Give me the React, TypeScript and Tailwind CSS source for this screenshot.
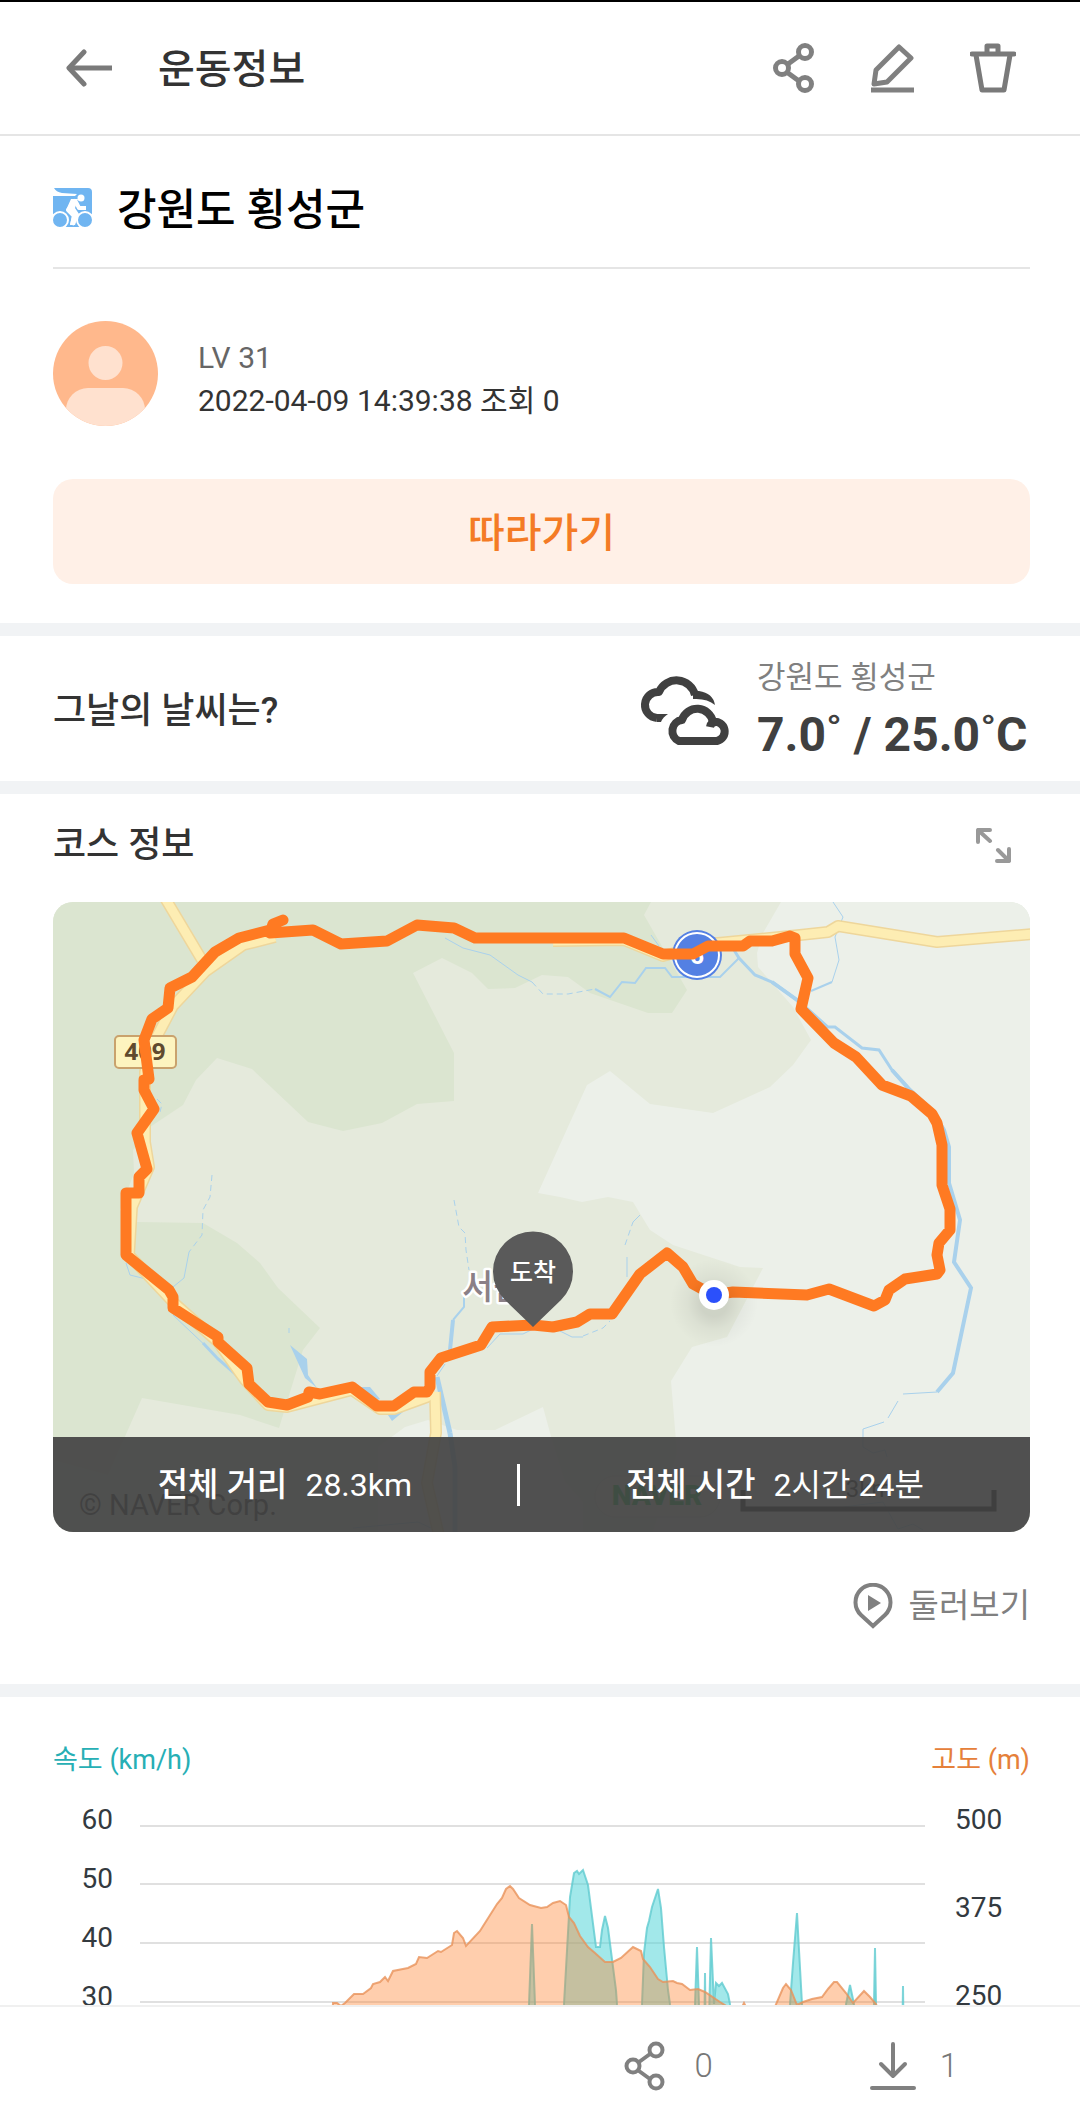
import React from "react";

const ROUTE =
  "M230 18 L220 22 L217 31 L260 28 L288 42 L334 39 L364 23 L401 26 L422 36 H571 L610 52 H640 L655 44 H690 L697 39 H719 L737 34 L742 36 V52 L755 76 L748 107 L781 141 L803 155 L829 183 L858 194 L879 212 L884 221 L889 243 V283 L897 307 V328 L886 341 L884 353 L887 368 L884 372 L852 377 L836 388 L832 398 L821 404 L776 387 L754 393 L680 390 L660 393 L640 382 L630 365 L614 351 L587 372 L559 412 H537 L524 420 L500 425 L480 423 L439 425 L428 443 L388 456 L377 470 V485 L374 490 H361 L341 504 H324 L299 485 L267 492 L256 490 L255 495 L234 503 L215 500 L196 482 L194 466 L165 440 V435 L120 406 V395 L116 388 L73 353 V291 H86 V275 L94 267 L84 231 L101 207 L91 188 V178 L96 177 L91 138 L99 117 L115 106 L117 86 L139 75 L162 50 L186 36 L217 28";

const ROADS = [
  "M112 -4 L149 58",
  "M222 35 L190 43 L153 69 L120 104 L101 140 L92 170 V240 L96 265 L79 305 L76 353 L120 400 L165 440 L192 478 L215 503 L234 505 L299 488 L327 507 H341 L374 495 L382 490",
  "M382 490 L383 531 L374 581 L386 634",
  "M500 39 L571 38 L610 54 L655 42 L747 33 L775 30 L785 24 L884 40 L981 32",
];

const RIVERS = [
  { d: "M542 87 L557 95 L569 80 L582 81 L593 66 L612 66 L619 75 H667 L686 56", w: 2 },
  { d: "M681 48 L686 56 L702 73 L719 80 L744 98 L774 125 L782 125 L809 146 L826 148 L839 168 L857 188", w: 3 },
  { d: "M719 80 L744 98 L774 125 M839 168 L857 188 L879 208 L891 228 L896 245 V281 L907 318 L901 360 L918 386 L900 471 L884 490", w: 4 },
  { d: "M884 490 L850 492 M845 499 L835 516 M831 520 L810 527 V545 L820 551 L832 548 L834 555", w: 1 },
  { d: "M780 0 L790 15 L782 35 L786 58 L779 80", w: 1 },
  { d: "M779 80 L758 89", w: 2 },
  { d: "M392 36 L410 46 L437 53 L465 73 L479 80", w: 1 },
  { d: "M598 33 L606 44", w: 1 },
  { d: "M73 361 L77 373 L97 378", w: 1 },
  { d: "M120 385 L131 376 L136 350", w: 1 },
  { d: "M120 413 L157 448", w: 1 },
  { d: "M150 441 L165 457 L187 476", w: 3 },
  { d: "M411 395 V405 L400 418", w: 2 },
  { d: "M400 418 L397 448", w: 4 },
  { d: "M384 475 L397 531", w: 5 },
  { d: "M397 531 L402 565 V630", w: 5 },
  { d: "M392 462 L384 474", w: 1 },
  { d: "M480 427 L470 432 H447 L434 446", w: 1 },
  { d: "M507 429 L519 435 H530", w: 1 },
  { d: "M574 375 V355 M580 320 L587 313", w: 1 },
  { d: "M300 626 L365 620 L378 626 M790 605 L830 600 L845 627 L860 622 L870 628", w: 1 },
];

const STREAMS = [
  "M479 80 L490 92 L515 92 L542 87",
  "M159 273 L157 295 L150 308 L149 333 L136 350",
  "M401 298 L406 325 L412 331 L413 348 L416 368",
  "M530 434 L550 426 L557 419",
  "M572 343 L580 320",
  "M104 197 L109 202 L107 210",
  "M236 426 V431",
];

const ELEVATION =
  "M190 240 L193 183 L197 183 L201 186 L205 183 L214 174 L223 174 L231 168 L233 164 L240 162 L245 157 L248 161 L253 151 L268 148 L276 144 L279 137 L287 138 L298 131 L301 132 L312 125 L314 113 L317 111 L323 118 L326 126 L340 111 L345 103 L357 84 L362 78 L366 69 L370 66 L373 69 L379 78 L390 85 L401 88 L407 87 L413 83 L420 81 L426 85 L429 97 L434 103 L440 116 L448 127 L455 133 L465 142 L473 142 L481 138 L493 127 L501 131 L503 139 L510 147 L518 159 L523 162 L533 161 L537 163 L542 164 L550 170 L558 169 L565 172 L580 182 L588 187 L601 189 L604 183 L607 189 L634 189 L643 168 L646 164 L651 170 L657 185 L663 182 L672 179 L682 177 L688 169 L694 162 L697 162 L706 173 L713 183 L724 171 L730 177 L736 184 L742 200 L785 240 Z";

const SPEED = [
  "M388 240 L389 184 L392 104 L395 184 L396 240",
  "M422 240 L424 184 L430 77 L434 53 L437 51 L439 54 L443 50 L448 65 L456 127 L460 127 L462 110 L465 96 L468 108 L473 147 L476 170 L477 184 V240",
  "M502 240 V184 L504 133 L507 108 L509 101 L512 87 L518 69 L521 88 L524 127 L528 170 L530 184 V240",
  "M555 240 V184 L557 127 L559 184 V240",
  "M564 240 L565 153 L566 240",
  "M568 240 L571 118 L574 184 L576 163 L579 166 L582 163 L588 174 L590 184 V240",
  "M649 240 L650 184 L653 143 L657 93 L659 130 L662 184 L663 240",
  "M705 240 L706 184 L710 165 L714 184 V240",
  "M733 240 L735 128 L737 240",
  "M762 240 L763 166 L764 240",
];

const SPEED_TICKS = [60, 50, 40, 30];
const ELEVATION_TICKS = [500, 375, 250];

const ShareIcon: React.FC<{ stroke: number }> = ({ stroke }) => (
  <svg width="42" height="50" viewBox="0 0 42 50" fill="none" stroke="#808080" strokeWidth={stroke}>
    <path d="M15 21 L26 13 M15 30 L26 38" />
    <circle cx="9" cy="25" r="6.5" />
    <circle cx="32" cy="9" r="6.5" />
    <circle cx="32" cy="41" r="6.5" />
  </svg>
);

const Divider: React.FC = () => <div className="h-[13px] shrink-0 bg-[#f1f3f5]" />;

const Header: React.FC = () => (
  <header className="flex h-[136px] shrink-0 items-center border-t-2 border-b-2 border-t-black border-b-[#e5e5e5] pl-[66px] pr-[64px]">
    <button type="button" aria-label="뒤로">
      <svg width="46" height="38" viewBox="0 0 46 38" fill="none" stroke="#7a7a7a" strokeWidth="5">
        <path d="M18 3 L3 19 L18 35" strokeLinecap="round" strokeLinejoin="round" />
        <path d="M3 19 H46" />
      </svg>
    </button>
    <h1 className="ml-[46px] pt-1 text-[40px] leading-[48px] font-medium">운동정보</h1>
    <div className="ml-auto flex items-center gap-[56px]">
      <button type="button" aria-label="공유">
        <ShareIcon stroke={5} />
      </button>
      <button type="button" aria-label="수정">
        <svg width="43" height="50" viewBox="0 0 43 50" fill="none" stroke="#808080" strokeWidth="5">
          <path d="M3 41 L5 27 L28 4 L40 15 L16 39 Z" strokeLinejoin="round" />
          <path d="M0 47 H43" />
        </svg>
      </button>
      <button type="button" aria-label="삭제">
        <svg width="46" height="50" viewBox="0 0 46 50" fill="none" stroke="#7a7a7a" strokeWidth="5" strokeLinejoin="round">
          <path d="M2 11 H44" strokeLinecap="round" />
          <path d="M17 10 V3 H28 V10" />
          <path d="M6 12 L12 47 H34 L40 12" />
        </svg>
      </button>
    </div>
  </header>
);

const BikeIcon: React.FC = () => (
  <svg width="39" height="39" viewBox="0 0 39 39" className="shrink-0">
    <path d="M1 0 H35 Q39 0 39 4 V35 Q39 39 35 39 H4 Q0 39 0 35 V8 H22 L24 6 L9 5 Q3 4 1 0 Z" fill="#70b5f1" />
    <g fill="none" stroke="#fff" strokeWidth="2">
      <circle cx="7" cy="32" r="8" />
      <circle cx="32" cy="32" r="8" />
    </g>
    <circle cx="28" cy="10" r="3.5" fill="#fff" />
    <path
      d="M23 12 L15 22 L21 28 L19 37 M23 14 L26 20 L33 20"
      fill="none"
      stroke="#fff"
      strokeWidth="4"
      strokeLinejoin="round"
    />
    <path d="M18 11 H25 L22 20 L26 26 L22 37 H17 L19 28 L13 22 Z" fill="#fff" />
  </svg>
);

const Profile: React.FC = () => (
  <section className="pr-[50px] pb-[39px] pl-[53px]">
    <div className="flex h-[133px] items-center gap-[25px] border-b-2 border-[#e5e5e5] pt-3">
      <BikeIcon />
      <h2 className="pt-1 text-[43px] leading-[52px] font-medium text-black">강원도 횡성군</h2>
    </div>
    <div className="mt-[52px] flex gap-[40px]">
      <svg width="105" height="105" viewBox="0 0 105 105" className="shrink-0">
        <clipPath id="avatar">
          <circle cx="52.5" cy="52.5" r="52.5" />
        </clipPath>
        <g clipPath="url(#avatar)">
          <rect width="105" height="105" fill="#ffb88c" />
          <circle cx="52.5" cy="42" r="17" fill="#ffe1cf" />
          <rect x="13" y="67" width="79" height="60" rx="22" fill="#ffe1cf" />
        </g>
      </svg>
      <div className="pt-[15px] text-[30px] leading-[43px]">
        <p className="text-[#666]">LV 31</p>
        <p>2022-04-09 14:39:38 조회 0</p>
      </div>
    </div>
    <button
      type="button"
      className="mt-[53px] h-[105px] w-full rounded-[20px] bg-[#fff0e7] pt-1 text-[40px] leading-[48px] font-medium text-[#f47b25]"
    >
      따라가기
    </button>
  </section>
);

const Weather: React.FC = () => (
  <section className="flex h-[145px] shrink-0 items-center justify-between pr-[50px] pl-[53px]">
    <h3 className="pt-1 text-[36px] leading-[48px] font-medium">그날의 날씨는?</h3>
    <div className="flex items-center gap-[27px]">
      <svg width="90" height="72" viewBox="0 0 90 72" fill="none" stroke="#404040" strokeWidth="8" strokeLinejoin="round">
        <path d="M39 68 A11 11 0 0 1 42 47 A16 16 0 0 1 73 49 A9.6 9.6 0 1 1 77 68 Z" />
        <path d="M70 54 Q71 49 76 49" />
        <path d="M17 45 A13 13 0 0 1 19 19 A19 19 0 0 1 55 22" />
        <path d="M17 41 H28 Q23 44 21 49 H17 Z M53 18 H59 Q73 20 75 32 Q67 25 53 26 Z" fill="#404040" stroke="none" />
      </svg>
      <div className="w-[273px] pt-1">
        <p className="text-[31px] leading-[48px] text-[#808080]">강원도 횡성군</p>
        <p className="text-[48px] leading-[66px] font-bold whitespace-nowrap text-[#404040]">7.0˚ / 25.0˚C</p>
      </div>
    </div>
  </section>
);

const CourseMap: React.FC = () => (
  <svg viewBox="0 0 977 630" className="block h-auto w-full">
    <defs>
      <radialGradient id="dotShadow">
        <stop offset="0.3" stopColor="#000" stopOpacity="0.1" />
        <stop offset="0.6" stopColor="#000" stopOpacity="0.04" />
        <stop offset="1" stopColor="#000" stopOpacity="0" />
      </radialGradient>
    </defs>

    {/* terrain */}
    <rect width="977" height="630" fill="#e5eadc" />
    <path
      d="M0 0 H598 L591 13 L634 88 L619 111 H595 L537 91 L515 75 L489 73 L462 86 L435 87 L419 71 L389 56 L360 71 L401 151 V199 L364 202 L329 221 L290 229 L255 220 L199 167 L164 156 L143 178 L130 203 L97 225 L80 248 L81 271 L67 308 L84 320 L150 321 L184 341 L207 361 L225 386 L267 426 L250 448 L226 526 L187 513 L89 496 L55 573 L0 558 Z"
      fill="#dbe5d0"
    />
    <path
      d="M728 0 L710 31 L704 51 L705 65 L740 105 L758 138 L740 163 L717 185 L660 211 L597 202 L557 169 L534 183 L485 291 L507 295 L529 300 L555 295 L580 300 L597 328 L620 343 L687 365 L710 366 L674 435 L639 445 L618 479 L624 551 L600 630 H977 V0 Z"
      fill="#ecf0e9"
    />
    <path d="M325 545 L352 525 L375 518 L404 528 H442 L490 505 L499 538 L512 580 L530 600 V630 H325 Z" fill="#ecf0e9" />

    {/* water */}
    <g fill="none" stroke="#a9d1ec">
      {RIVERS.map((river) => (
        <path key={river.d} d={river.d} strokeWidth={river.w} />
      ))}
      {STREAMS.map((d) => (
        <path key={d} d={d} strokeDasharray="6 4" />
      ))}
    </g>
    <path
      d="M237 443 L254 457 L255 473 L264 486 L252 476 Z M307 485 L317 485 L327 497 L322 499 Z M335 513 L339 519 L356 505 Z"
      fill="#a9d1ec"
    />

    {/* roads */}
    <g fill="none" strokeLinejoin="round">
      {ROADS.map((d) => (
        <path key={d} d={d} stroke="#eed69b" strokeWidth="12" />
      ))}
      {ROADS.map((d) => (
        <path key={d} d={d} stroke="#fdedb3" strokeWidth="9" />
      ))}
    </g>
    <rect x="62" y="134" width="61" height="32" rx="4" fill="#fdf4bf" stroke="#c9a26d" strokeWidth="2" />
    <text x="92" y="158" textAnchor="middle" className="font-['Noto_Sans'] text-[24px] font-bold" fill="#604a2e">
      409
    </text>
    <circle cx="644" cy="53" r="25" fill="#5480e3" />
    <circle cx="644" cy="53" r="22" fill="none" stroke="#fff" strokeWidth="2" />
    <text x="644" y="62" textAnchor="middle" className="font-['Noto_Sans'] text-[24px] font-bold" fill="#fff">
      6
    </text>
    <text
      x="409"
      y="397"
      className="text-[34px] font-medium"
      fill="#8b8087"
      stroke="#fff"
      strokeWidth="5"
      strokeLinejoin="round"
      paintOrder="stroke"
    >
      서원면
    </text>

    {/* ridden course */}
    <path d={ROUTE} fill="none" stroke="#ff7a22" strokeWidth="11" strokeLinejoin="round" strokeLinecap="round" />
    <circle cx="661" cy="401" r="44" fill="url(#dotShadow)" />
    <circle cx="661" cy="393" r="15" fill="#fff" />
    <circle cx="661" cy="393" r="8" fill="#2b50fb" />
    <path d="M480 425 L452 398 A40 40 0 1 1 508 398 Z" fill="#5a5a5a" />
    <text x="480" y="379" textAnchor="middle" className="text-[25px] font-medium" fill="#fff">
      도착
    </text>

    {/* map provider marks */}
    <text x="26" y="613" className="text-[29px]" fill="#222">
      © NAVER Corp.
    </text>
    <rect x="542" y="574" width="125" height="41" rx="20" fill="#e9ede4" stroke="#d5d8cc" />
    <text x="604" y="603" textAnchor="middle" className="text-[28px] font-black" fill="#00c73c">
      NAVER
    </text>
    <path d="M690 588 V607 H941 V588" fill="none" stroke="#000" strokeWidth="5" />
    <text x="816" y="595" textAnchor="middle" className="text-[24px]" fill="#000">
      3km
    </text>
  </svg>
);

const Course: React.FC = () => (
  <section className="pr-[50px] pl-[53px]">
    <div className="flex h-[108px] items-center justify-between pr-[19px] pb-[6px]">
      <h3 className="text-[36px] leading-[48px] font-medium">코스 정보</h3>
      <button type="button" aria-label="지도 확대">
        <svg width="35" height="35" viewBox="0 0 35 35" fill="none" stroke="#999" strokeWidth="4" strokeLinecap="round" strokeLinejoin="round">
          <path d="M14 2 H2 V14 M2 2 L14 13" />
          <path d="M21 33 H33 V21 M33 33 L22 22" />
        </svg>
      </button>
    </div>
    <div className="relative overflow-hidden rounded-[20px]">
      <CourseMap />
      <div className="absolute inset-x-0 bottom-0 grid h-[95px] grid-cols-[10fr_3px_11fr] items-center bg-[#444]/93 text-[33px] leading-[40px] text-white">
        <p className="flex items-center justify-center gap-[18px]">
          <span className="font-medium">전체 거리</span>
          <span className="text-[32px]">28.3km</span>
        </p>
        <span className="h-[42px] bg-white" />
        <p className="flex items-center justify-center gap-[18px]">
          <span className="font-medium">전체 시간</span>
          <span className="text-[32px]">2시간 24분</span>
        </p>
      </div>
    </div>
    <div className="flex h-[152px] items-center justify-end pb-1">
      <button type="button" className="flex items-center gap-[16px] text-[33px] leading-[40px] text-[#808080]">
        <svg width="40" height="46" viewBox="0 0 40 46" fill="none" stroke="#808080" strokeWidth="4">
          <path d="M20 43 L8 32 A17.5 17.5 0 1 1 32 32 Z" />
          <path d="M15 12 L28 20 L15 28 Z" fill="#808080" stroke="none" />
        </svg>
        둘러보기
      </button>
    </div>
  </section>
);

const Chart: React.FC = () => (
  <section className="pt-[43px] pr-[50px] pl-[53px]">
    <div className="flex h-[36px] items-center justify-between pt-1 text-[27px] leading-[36px]">
      <span className="text-[#27afb5]">속도 (km/h)</span>
      <span className="text-[#e5803a]">고도 (m)</span>
    </div>
    <div className="flex items-start text-[28px] text-[#333a40]">
      <div className="w-[60px] shrink-0 pt-[14px] text-right leading-[59px]">
        {SPEED_TICKS.map((tick) => (
          <p key={tick}>{tick}</p>
        ))}
      </div>
      <svg viewBox="0 0 785 240" className="mt-[44px] mr-[30px] ml-[27px] h-auto min-w-0 flex-1">
        <path d="M0 6 H785 M0 64 H785 M0 123 H785 M0 182 H785" stroke="#e0e0e0" strokeWidth="2" />
        {SPEED.map((d) => (
          <path key={d} d={d} fill="#54d5d8" fillOpacity="0.54" stroke="#5fcbd0" strokeOpacity="0.8" strokeWidth="2" />
        ))}
        <path d={ELEVATION} fill="#ff7e27" fillOpacity="0.38" stroke="#e8925a" strokeOpacity="0.8" strokeWidth="2" />
      </svg>
      <div className="w-[75px] shrink-0 leading-[88px]">
        {ELEVATION_TICKS.map((tick) => (
          <p key={tick}>{tick}</p>
        ))}
      </div>
    </div>
  </section>
);

const BottomBar: React.FC = () => (
  <footer className="flex h-[120px] shrink-0 items-center justify-end gap-[157px] border-t-2 border-[#f0f0f0] bg-white pr-[122px] text-[33px] leading-[40px] font-light text-[#777]">
    <button type="button" aria-label="공유 0" className="flex items-center gap-[28px]">
      <ShareIcon stroke={4} />
      <span>0</span>
    </button>
    <button type="button" aria-label="다운로드 1" className="flex items-center gap-[24px]">
      <svg width="46" height="48" viewBox="0 0 46 48" fill="none" stroke="#808080" strokeWidth="4" strokeLinecap="round" strokeLinejoin="round">
        <path d="M23 2 V34 M11 22 L23 34 L35 22" />
        <path d="M2 46 H44" />
      </svg>
      <span>1</span>
    </button>
  </footer>
);

const App: React.FC = () => {
  return (
    <div className="flex h-screen flex-col bg-white font-['Roboto','Noto_Sans_CJK_KR',sans-serif] text-[#333]">
      <Header />
      <main className="min-h-0 flex-1 overflow-y-auto [scrollbar-width:none]">
        <Profile />
        <Divider />
        <Weather />
        <Divider />
        <Course />
        <Divider />
        <Chart />
      </main>
      <BottomBar />
    </div>
  );
};

export default App;
